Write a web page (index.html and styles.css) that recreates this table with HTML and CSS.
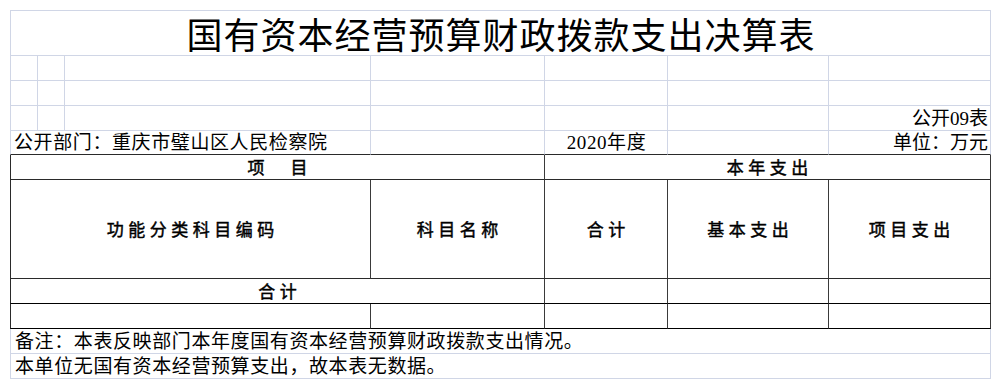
FILE: index.html
```html
<!DOCTYPE html>
<html lang="zh-CN">
<head>
<meta charset="utf-8">
<title>国有资本经营预算财政拨款支出决算表</title>
<link rel="stylesheet" href="styles.css">
</head>
<body>
<div class="sheet">
  <div class="cell left top span-7 title">国有资本经营预算财政拨款支出决算表</div>

  <div class="cell left"></div><div class="cell"></div><div class="cell"></div><div class="cell"></div><div class="cell"></div><div class="cell"></div><div class="cell"></div>

  <div class="cell left"></div><div class="cell"></div><div class="cell"></div><div class="cell"></div><div class="cell"></div><div class="cell"></div><div class="cell"></div>

  <div class="cell left"></div><div class="cell"></div><div class="cell"></div><div class="cell"></div><div class="cell"></div><div class="cell"></div><div class="cell text right">公开09表</div>

  <div class="cell left span-3 text under">公开部门：重庆市璧山区人民检察院</div><div class="cell under"></div><div class="cell under text center">2020年度</div><div class="cell under"></div><div class="cell under text right">单位：万元</div>

  <div class="cell dk dleft span-4 head">项　目</div><div class="cell dk span-3 head">本年支出</div>

  <div class="cell dk dleft span-3 head mid">功能分类科目编码</div><div class="cell dk head mid">科目名称</div><div class="cell dk head mid">合计</div><div class="cell dk head mid">基本支出</div><div class="cell dk head mid">项目支出</div>

  <div class="cell dk dleft span-4 head bk">合计</div><div class="cell dk bk"></div><div class="cell dk bk"></div><div class="cell dk bk"></div>

  <div class="cell dk dleft span-3 bk"></div><div class="cell dk bk"></div><div class="cell dk bk"></div><div class="cell dk bk"></div><div class="cell dk bk"></div>

  <div class="cell left span-7 text note">备注：本表反映部门本年度国有资本经营预算财政拨款支出情况。</div>

  <div class="cell left span-7 text note">本单位无国有资本经营预算支出，故本表无数据。</div>
</div>
</body>
</html>
```

FILE: styles.css
```css
html, body {
  margin: 0;
  padding: 0;
  background: #ffffff;
}

body {
  padding: 10px;
  font-family: "Liberation Serif", "Noto Sans CJK SC", serif;
  color: #000;
}

.sheet {
  display: grid;
  width: 981px;
  grid-template-columns: 28px 27px 306px 174px 123px 161px 162px;
  grid-template-rows: 46px 25px 25px 25px 24px 25px 99px 25px 25px 25px 25px;
}

.cell {
  box-sizing: border-box;
  border-right: 1px solid #d0d6e6;
  border-bottom: 1px solid #d0d6e6;
  display: flex;
  align-items: flex-end;
  min-width: 0;
  white-space: nowrap;
}

.left { border-left: 1px solid #d0d6e6; }
.top { border-top: 1px solid #d0d6e6; }

.span-3 { grid-column: span 3; }
.span-4 { grid-column: span 4; }
.span-7 { grid-column: span 7; }

.title {
  justify-content: center;
  align-items: center;
  font-family: "Noto Sans CJK SC", sans-serif;
  font-size: 36px;
  line-height: 44px;
  letter-spacing: 1px;
  padding-left: 1px;
}

.text {
  font-size: 19px;
  line-height: 22px;
  letter-spacing: 0.6px;
  padding: 0 2px 0 3px;
}

.text.right { justify-content: flex-end; letter-spacing: 0; }
.text.center { justify-content: center; }

.note { padding-left: 4px; }

.under { border-bottom-color: #2a2a2a; }

.dk {
  border-right-color: #3a3a3a;
  border-bottom-color: #2a2a2a;
}

.dleft { border-left: 1px solid #2a2a2a; }

.bk { border-bottom-color: #000; }

.head {
  justify-content: center;
  align-items: center;
  font-family: "Noto Sans CJK SC", sans-serif;
  font-weight: 400;
  -webkit-text-stroke: 0.45px #000;
  font-size: 17px;
  line-height: 22px;
  letter-spacing: 4.5px;
  padding-left: 4.5px;
}
```
